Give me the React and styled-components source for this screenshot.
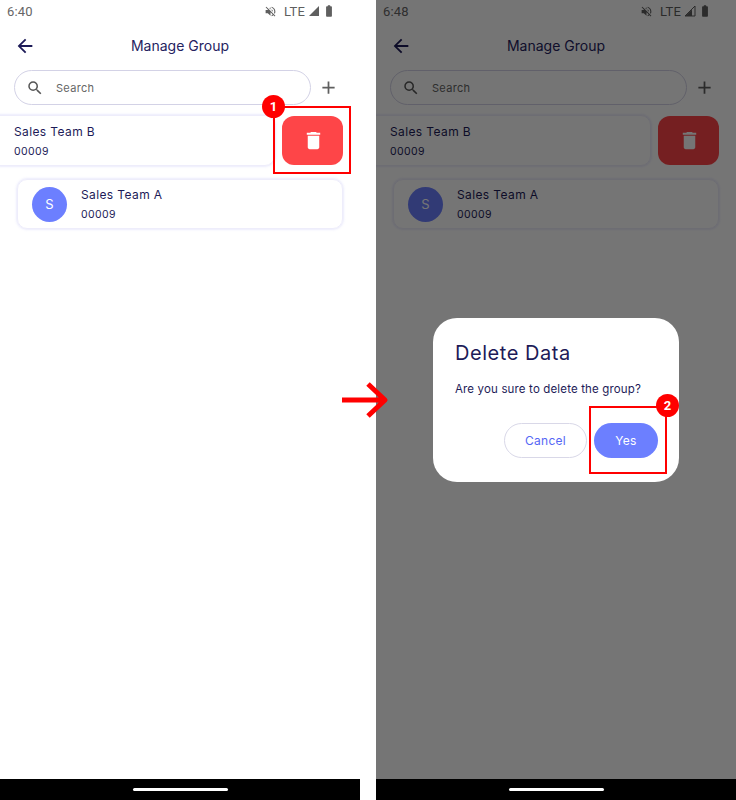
import React from "react";
import styled, { createGlobalStyle } from "styled-components";
import { MdArrowBack, MdSearch, MdAdd, MdDelete, MdVolumeOff, MdBatteryStd } from "react-icons/md";

const Global = createGlobalStyle`
  html, body { margin: 0; padding: 0; background: #fff; }
  body { font-family: Inter, "Liberation Sans", sans-serif; }
  * { box-sizing: border-box; }
`;
const Stage = styled.div`
  display: flex;
  gap: 16px;
  width: 736px;
  height: 800px;
  overflow: hidden;
  position: relative;
`;
const Phone = styled.section`
  position: relative;
  width: 360px;
  height: 800px;
  flex: none;
  display: flex;
  flex-direction: column;
  background: #fff;
  overflow: hidden;
`;
const Screen = styled.div`
  flex: 1;
  min-height: 0;
  display: flex;
  flex-direction: column;
`;
const StatusBar = styled.div`
  height: 22px;
  flex: none;
  display: flex;
  align-items: center;
  padding: 0 24px 0 7px;
  font-family: Roboto, sans-serif;
  font-size: 13px;
  color: #666;
  letter-spacing: 0.2px;
`;
const Time = styled.span`
  flex: 1;
`;
const StatusIcons = styled.div`
  display: flex;
  align-items: center;
  color: #5f5f5f;
`;
const Lte = styled.span`
  margin: 0 3px 0 7px;
  font-size: 13px;
`;
const Header = styled.header`
  height: 47px;
  flex: none;
  display: flex;
  align-items: center;
  padding: 0 0 0 14px;
  position: relative;
  color: #1d1b58;
`;
const Title = styled.h1`
  margin: 0;
  flex: 1;
  text-align: center;
  padding-right: 36px;
  font-size: 14px;
  font-weight: 400;
  letter-spacing: 0;
  color: #25235f;
`;
const SearchRow = styled.div`
  display: flex;
  align-items: center;
  padding: 0 0 0 14px;
  margin-top: 1px;
  height: 35px;
  flex: none;
`;
const SearchBox = styled.div`
  width: 297px;
  height: 35px;
  border: 1px solid #d3d2e6;
  border-radius: 18px;
  display: flex;
  align-items: center;
  padding-left: 11px;
  gap: 12px;
  font-size: 11px;
  letter-spacing: 0.3px;
  color: #666;
`;
const PlusButton = styled.div`
  display: flex;
  margin-left: 7px;
  color: #5f5f5f;
`;
const SwipeRow = styled.div`
  display: flex;
  gap: 7px;
  margin: 10px 17px 0 -10px;
  height: 51px;
  flex: none;
  align-items: center;
`;
const Card = styled.div`
  flex: 1;
  height: ${(p) => p.$h}px;
  border: 1px solid #eeedfb;
  border-radius: 10px;
  box-shadow: 0 0 3px rgba(110, 110, 235, 0.28);
  display: flex;
  align-items: center;
  padding-left: ${(p) => p.$pad}px;
  gap: 14px;
`;
const DeleteButton = styled.div`
  width: 61px;
  height: 49px;
  flex: none;
  border-radius: 12px;
  background: #fe4548;
  color: #fff;
  display: flex;
  align-items: center;
  justify-content: center;
  padding-left: 1px;
`;
const GroupRow = styled.div`
  margin: 13px 17px 0;
  height: 50px;
  display: flex;
  flex: none;
`;
const Avatar = styled.div`
  width: 35px;
  height: 35px;
  flex: none;
  border-radius: 50%;
  background: #6c7fff;
  color: #fff;
  display: flex;
  align-items: center;
  justify-content: center;
  font-size: 13px;
`;
const GroupInfo = styled.div`
  display: flex;
  flex-direction: column;
  gap: 6px;
  padding-top: 1px;
`;
const GroupName = styled.div`
  font-size: 12px;
  line-height: 14px;
  letter-spacing: 0.38px;
  color: #1d1b58;
`;
const GroupCode = styled.div`
  font-size: 10.5px;
  line-height: 13px;
  letter-spacing: 0.4px;
  color: #1d1b58;
`;
const NavBar = styled.div`
  height: 21px;
  flex: none;
  background: #000;
  display: flex;
  align-items: center;
  justify-content: center;
  position: relative;
  z-index: 3;
`;
const NavHandle = styled.div`
  width: 95px;
  height: 3px;
  border-radius: 2px;
  background: #fff;
`;
const Scrim = styled.div`
  position: absolute;
  inset: 0 0 21px 0;
  background: rgba(0, 0, 0, 0.54);
  display: flex;
  align-items: center;
  justify-content: center;
  padding-top: 21px;
`;
const Dialog = styled.div`
  width: 246px;
  height: 164px;
  background: #fff;
  border-radius: 24px;
  padding: 22px 21px 0 22px;
  display: flex;
  flex-direction: column;
`;
const DialogTitle = styled.h2`
  margin: 0;
  font-size: 20px;
  line-height: 26px;
  font-weight: 400;
  letter-spacing: 0.55px;
  color: #1d1b58;
`;
const DialogText = styled.p`
  margin: 16px 0 0;
  font-size: 11.5px;
  line-height: 15px;
  letter-spacing: 0.15px;
  color: #1d1b58;
`;
const DialogActions = styled.div`
  display: flex;
  justify-content: flex-end;
  gap: 7px;
  margin-top: 26px;
`;
const PillButton = styled.div`
  width: ${(p) => (p.$primary ? 64 : 83)}px;
  height: 35px;
  border-radius: 18px;
  display: flex;
  align-items: center;
  justify-content: center;
  font-size: 12px;
  letter-spacing: 0.3px;
  background: ${(p) => (p.$primary ? "#6c7fff" : "#fff")};
  color: ${(p) => (p.$primary ? "#fff" : "#5567f5")};
  border: ${(p) => (p.$primary ? "none" : "1px solid #d9d8e8")};
`;
const Highlight = styled.div`
  position: absolute;
  left: ${(p) => p.$x}px;
  top: ${(p) => p.$y}px;
  width: 78px;
  height: 68px;
  border: 2px solid #f00;
  z-index: 4;
`;
const Badge = styled.div`
  position: absolute;
  left: ${(p) => p.$x}px;
  top: ${(p) => p.$y}px;
  width: 23px;
  height: 23px;
  border-radius: 50%;
  background: #f00;
  color: #fff;
  display: flex;
  align-items: center;
  justify-content: center;
  font-family: Roboto, sans-serif;
  font-size: 13px;
  font-weight: 700;
  z-index: 5;
`;
const FlowArrow = styled.svg`
  position: absolute;
  left: 340px;
  top: 378px;
  z-index: 6;
`;

const SignalIcon = ({ outline }) => (
  <svg width="12" height="12" viewBox="0 0 12 12">
    <path d="M11 1v10H1z" fill={outline ? "none" : "#5f5f5f"} stroke="#5f5f5f" strokeWidth={outline ? 1 : 0} />
    {outline && <path d="M8 4.5V11H1.5z" fill="#5f5f5f" />}
  </svg>
);

const BatteryIcon = styled(MdBatteryStd)`
  margin-left: 2px;
`;

const Status = ({ time, outline }) => (
  <StatusBar>
    <Time>{time}</Time>
    <StatusIcons>
      <MdVolumeOff size={13} />
      <Lte>LTE</Lte>
      <SignalIcon outline={outline} />
      <BatteryIcon size={14} />
    </StatusIcons>
  </StatusBar>
);

const Group = ({ name }) => (
  <GroupInfo>
    <GroupName>{name}</GroupName>
    <GroupCode>00009</GroupCode>
  </GroupInfo>
);

const Content = ({ time, outline }) => (
  <Screen>
    <Status time={time} outline={outline} />
    <Header>
      <MdArrowBack size={22} />
      <Title>Manage Group</Title>
    </Header>
    <SearchRow>
      <SearchBox>
        <MdSearch size={18} color="#555" />
        Search
      </SearchBox>
      <PlusButton>
        <MdAdd size={21} />
      </PlusButton>
    </SearchRow>
    <SwipeRow>
      <Card $pad={23} $h={51}>
        <Group name="Sales Team B" />
      </Card>
      <DeleteButton>
        <MdDelete size={23} />
      </DeleteButton>
    </SwipeRow>
    <GroupRow>
      <Card $pad={14} $h={50}>
        <Avatar>S</Avatar>
        <Group name="Sales Team A" />
      </Card>
    </GroupRow>
  </Screen>
);

export default function App() {
  return (
    <Stage>
      <Global />
      <Phone>
        <Content time="6:40" />
        <NavBar>
          <NavHandle />
        </NavBar>
        <Highlight $x={273} $y={106} />
        <Badge $x={262} $y={95}>1</Badge>
      </Phone>
      <Phone>
        <Content time="6:48" outline />
        <Scrim>
          <Dialog>
            <DialogTitle>Delete Data</DialogTitle>
            <DialogText>Are you sure to delete the group?</DialogText>
            <DialogActions>
              <PillButton>Cancel</PillButton>
              <PillButton $primary>Yes</PillButton>
            </DialogActions>
          </Dialog>
        </Scrim>
        <NavBar>
          <NavHandle />
        </NavBar>
        <Highlight $x={213} $y={406} />
        <Badge $x={280} $y={394}>2</Badge>
      </Phone>
      <FlowArrow width="50" height="44" viewBox="0 0 50 44">
        <path d="M2 22h42M28 6l17 16-17 16" fill="none" stroke="#f00" strokeWidth="5" strokeLinejoin="round" />
      </FlowArrow>
    </Stage>
  );
}
